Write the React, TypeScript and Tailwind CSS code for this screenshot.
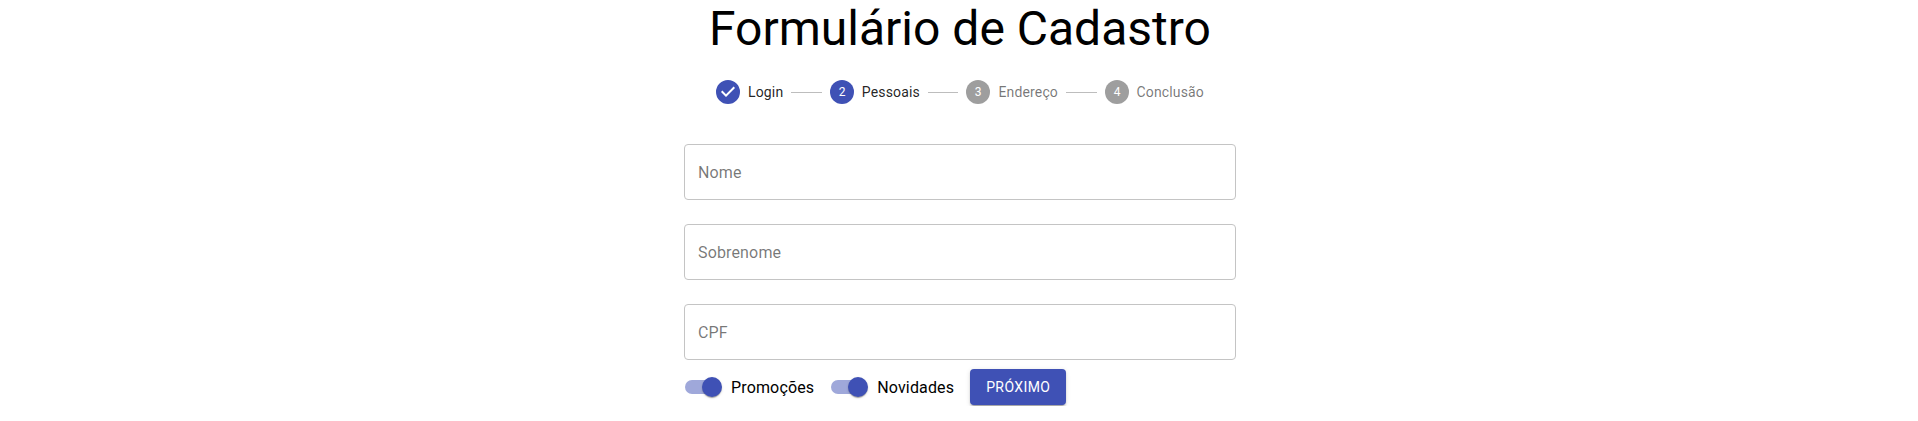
import React from "react";

const steps = [
  { n: 1, label: "Login", done: true, active: true },
  { n: 2, label: "Pessoais", done: false, active: true },
  { n: 3, label: "Endereço", done: false, active: false },
  { n: 4, label: "Conclusão", done: false, active: false },
];

function StepIcon({ n, done, active }: { n: number; done: boolean; active: boolean }) {
  return (
    <svg viewBox="0 0 24 24" className={active ? "h-6 w-6 fill-[#3f51b5]" : "h-6 w-6 fill-[#9e9e9e]"}>
      {done ? (
        <path d="M12 0a12 12 0 1 0 0 24 12 12 0 0 0 0-24zm-2 17l-5-5 1.4-1.4 3.6 3.6 7.6-7.6L19 8l-9 9z" />
      ) : (
        <>
          <circle cx="12" cy="12" r="12" />
          <text x="12" y="16" textAnchor="middle" className="fill-white text-[12px]">{n}</text>
        </>
      )}
    </svg>
  );
}

function Field({ label }: { label: string }) {
  return (
    <div className="flex h-14 items-center rounded border border-[#c4c4c4] px-[13px] pt-px text-base tracking-[0.00938em] text-black/54">
      {label}
    </div>
  );
}

function Toggle({ label }: { label: string }) {
  return (
    <div className="-ml-[11px] mr-4 flex items-center">
      <div className="flex h-[38px] w-[58px] items-center p-3">
        <div className="flex h-3.5 w-[34px] items-center rounded-full bg-[#9fa8da]">
          <div className="ml-[17px] h-5 w-5 shrink-0 rounded-full bg-[#3f51b5] shadow-[0px_2px_1px_-1px_rgba(0,0,0,0.2),0px_1px_1px_0px_rgba(0,0,0,0.14),0px_1px_3px_0px_rgba(0,0,0,0.12)]" />
        </div>
      </div>
      <span className="pt-px text-base tracking-[0.00938em]">{label}</span>
    </div>
  );
}

export default function App() {
  return (
    <div className="pl-0.5">
      <main className="mx-auto w-[600px] px-6 font-['Roboto',sans-serif] text-black">
        <h1 className="h-14 pt-px text-center text-[48px] leading-[56px] font-normal">Formulário de Cadastro</h1>
        <div className="flex items-center p-6">
          {steps.map((s, i) => (
            <React.Fragment key={s.n}>
              {i > 0 && <div className="flex-1 border-t border-[#bdbdbd]" />}
              <div className="flex items-center px-2">
                <StepIcon n={s.n} done={s.done} active={s.active} />
                <span className={s.active ? "pl-2 text-sm leading-5 tracking-[0.01071em] text-black/87" : "pl-2 text-sm leading-5 tracking-[0.01071em] text-black/54"}>
                  {s.label}
                </span>
              </div>
            </React.Fragment>
          ))}
        </div>
        <form>
          <div className="flex flex-col gap-6 pt-4 pb-2">
            <Field label="Nome" />
            <Field label="Sobrenome" />
            <Field label="CPF" />
          </div>
          <div className="flex items-center">
            <Toggle label="Promoções" />
            <Toggle label="Novidades" />
            <button type="button" className="h-9 rounded bg-[#3f51b5] px-4 text-sm font-normal tracking-[0.02857em] text-white uppercase shadow-[0px_3px_1px_-2px_rgba(0,0,0,0.2),0px_2px_2px_0px_rgba(0,0,0,0.14),0px_1px_5px_0px_rgba(0,0,0,0.12)]">
              Próximo
            </button>
          </div>
        </form>
      </main>
    </div>
  );
}
